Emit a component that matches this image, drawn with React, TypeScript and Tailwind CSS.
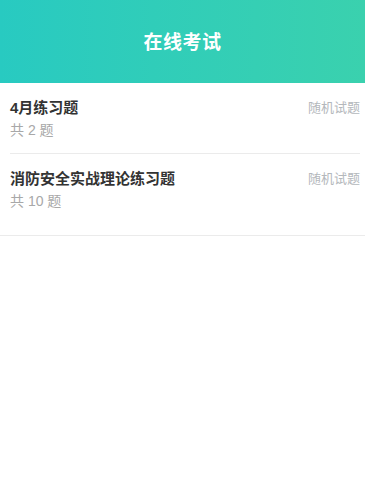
const exams = [
  { id: 1, title: '4月练习题', count: 2 },
  { id: 2, title: '消防安全实战理论练习题', count: 10 },
];

export default function App() {
  return (
    <div className="min-h-screen bg-white" style={{ fontFamily: '"Liberation Sans", "Noto Sans CJK SC", sans-serif' }}>
      {/* Header */}
      <div className="h-[83px] pt-[4px] flex items-center justify-center bg-gradient-to-r from-[#28cac1] to-[#3ad1ae]">
        <h1 className="text-white text-[19px] font-bold tracking-[0.5px]">在线考试</h1>
      </div>

      {/* List */}
      <div className="pl-[10px] pr-[5px] pb-[11px] border-b border-[#ebebeb]">
        {exams.map((e, i) => (
          <div
            key={e.id}
            className={`flex justify-between pt-[16px] pb-[15px] ${i < exams.length - 1 ? 'border-b border-[#ebebeb]' : ''}`}
          >
            <div>
              <div className="text-[15px] font-bold text-[#333] leading-[17px]">{e.title}</div>
              <div className="text-[14px] text-[#a8a8a8] leading-[16px] mt-[6px]">共 {e.count} 题</div>
            </div>
            <div className="text-[13px] text-[#b4b8bc] leading-[17px]">随机试题</div>
          </div>
        ))}
      </div>
    </div>
  );
}
